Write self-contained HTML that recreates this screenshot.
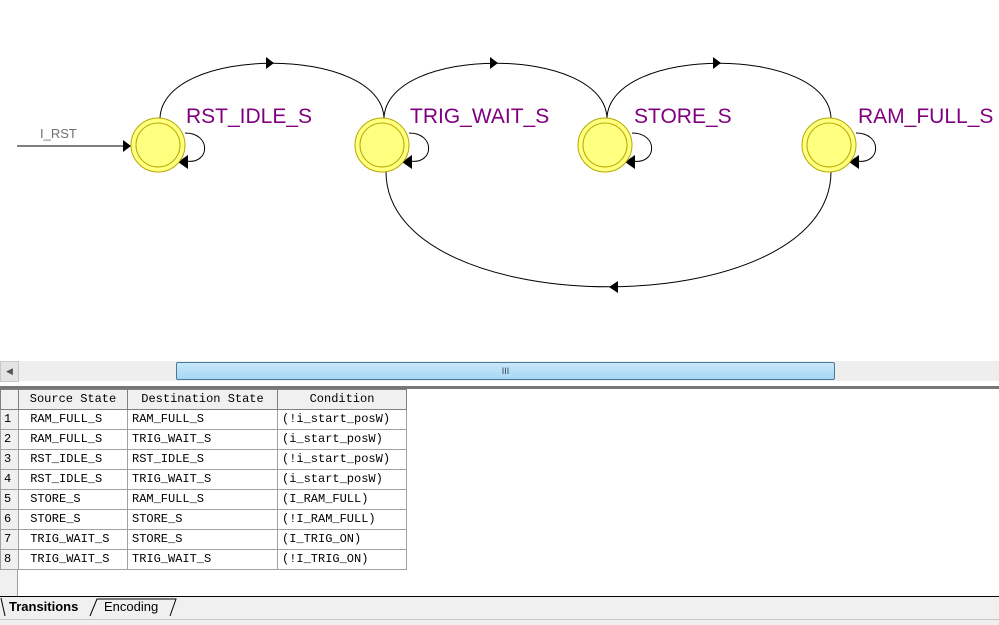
<!DOCTYPE html>
<html><head><meta charset="utf-8"><style>
body{margin:0;width:999px;height:624px;overflow:hidden;background:#fff;position:relative;font-family:"Liberation Sans",sans-serif}
.abs{position:absolute}
table{border-collapse:collapse;table-layout:fixed;font-family:"Liberation Mono",monospace;font-size:12px;position:absolute;left:0;top:389px;width:406px}
td{border:1px solid #a0a0a0;height:19px;padding:0 0 0 4px;white-space:nowrap;overflow:hidden;line-height:19px}
td.n{background:#f0f0f0;padding:0 0 0 3px}
tr.h td{background:#f0f0f0;text-align:center;padding:0;border-color:#808080}
</style></head><body>
<svg class="abs" style="left:0;top:0" width="999" height="360">
<g fill="none" stroke="#000" stroke-width="1">
<path d="M160,118 C163,45 381,45 384,118"/>
<path d="M384,118 C387,45 604,45 607,118"/>
<path d="M607,118 C610,45 828,45 831,118"/>
<path d="M831,172 C830,325 387,325 386,172"/>
<line x1="17" y1="146" x2="124" y2="146"/>
<path d="M185,133 C212,133 210,165 186,161"/><path d="M409,133 C436,133 434,165 410,161"/><path d="M632,133 C659,133 657,165 633,161"/><path d="M856,133 C883,133 881,165 857,161"/>
</g>
<g fill="#000">
<path d="M266,57L274,63L266,69z"/><path d="M490,57L498,63L490,69z"/><path d="M713,57L721,63L713,69z"/>
<path d="M618,281L609,287L618,293z"/>
<path d="M123,140L131,146L123,152z"/>
<path d="M188,155L178,162L188,169z"/><path d="M412,155L402,162L412,169z"/><path d="M635,155L625,162L635,169z"/><path d="M859,155L849,162L859,169z"/>
</g>
<g fill="#ffff80" stroke="#b8a800" stroke-width="1">
<circle cx="158" cy="145" r="27"/><circle cx="158" cy="145" r="22"/>
<circle cx="382" cy="145" r="27"/><circle cx="382" cy="145" r="22"/>
<circle cx="605" cy="145" r="27"/><circle cx="605" cy="145" r="22"/>
<circle cx="829" cy="145" r="27"/><circle cx="829" cy="145" r="22"/>
</g>
<g fill="#800080" font-family="Liberation Sans" font-size="21">
<text x="186" y="123">RST_IDLE_S</text><text x="410" y="123">TRIG_WAIT_S</text><text x="634" y="123">STORE_S</text><text x="858" y="123">RAM_FULL_S</text>
</g>
<text x="40" y="138" font-size="13" fill="#707070">I_RST</text>
</svg>
<div class="abs" style="left:0;top:361px;width:999px;height:20px;background:#eeeeee"></div>
<div class="abs" style="left:0;top:361px;width:17px;height:19px;background:#e4e4e4;border:1px solid #c8c8c8;font-size:9px;color:#555;line-height:19px;text-align:center">◀</div>
<div class="abs" style="left:176px;top:362px;width:657px;height:16px;background:linear-gradient(#c8e8fa,#a5d7f5);border:1px solid #4a7a9a;border-radius:2px;text-align:center;font-size:9px;color:#345;line-height:16px">III</div>
<div class="abs" style="left:0;top:386px;width:999px;height:3px;background:#777"></div>
<div class="abs" style="left:0;top:389px;width:999px;height:207px;background:#fff"></div>
<div class="abs" style="left:0;top:389px;width:17px;height:207px;background:#f0f0f0;border-right:1px solid #a0a0a0"></div>
<table>
<colgroup><col style="width:18px"><col style="width:109px"><col style="width:150px"><col style="width:129px"></colgroup>
<tr class="h"><td class="n"></td><td>Source State</td><td>Destination State</td><td>Condition</td></tr>
<tr><td class="n">1</td><td>&nbsp;RAM_FULL_S</td><td>RAM_FULL_S</td><td>(!i_start_posW)</td></tr>
<tr><td class="n">2</td><td>&nbsp;RAM_FULL_S</td><td>TRIG_WAIT_S</td><td>(i_start_posW)</td></tr>
<tr><td class="n">3</td><td>&nbsp;RST_IDLE_S</td><td>RST_IDLE_S</td><td>(!i_start_posW)</td></tr>
<tr><td class="n">4</td><td>&nbsp;RST_IDLE_S</td><td>TRIG_WAIT_S</td><td>(i_start_posW)</td></tr>
<tr><td class="n">5</td><td>&nbsp;STORE_S</td><td>RAM_FULL_S</td><td>(I_RAM_FULL)</td></tr>
<tr><td class="n">6</td><td>&nbsp;STORE_S</td><td>STORE_S</td><td>(!I_RAM_FULL)</td></tr>
<tr><td class="n">7</td><td>&nbsp;TRIG_WAIT_S</td><td>STORE_S</td><td>(I_TRIG_ON)</td></tr>
<tr><td class="n">8</td><td>&nbsp;TRIG_WAIT_S</td><td>TRIG_WAIT_S</td><td>(!I_TRIG_ON)</td></tr>
</table>
<div class="abs" style="left:0;top:596px;width:999px;height:28px;background:#f0f0f0;border-top:1px solid #000"></div>
<div class="abs" style="left:0;top:619px;width:999px;height:1px;background:#c8c8c8"></div>
<div class="abs" style="left:9px;top:599px;font-size:13px;font-weight:bold">Transitions</div>
<div class="abs" style="left:104px;top:599px;font-size:13px">Encoding</div>
<svg class="abs" style="left:0;top:596px" width="200" height="24"><g fill="none" stroke="#000"><path d="M1,2L5,20"/><path d="M90,20L97,3L176,3L170,20"/></g></svg>
</body></html>
